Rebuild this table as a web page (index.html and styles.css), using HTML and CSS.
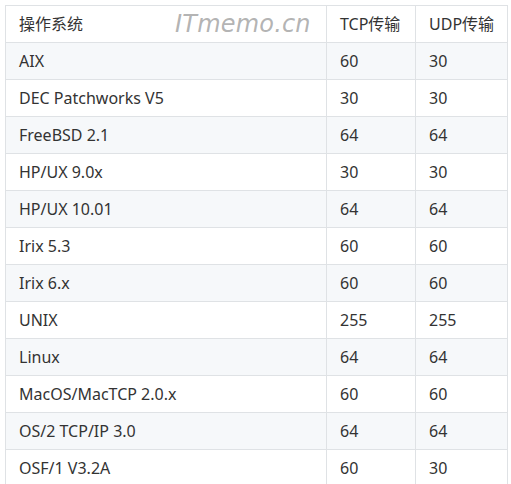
FILE: index.html
```html
<!DOCTYPE html>
<html lang="zh">
<head>
<meta charset="utf-8">
<link rel="stylesheet" href="styles.css">
</head>
<body>
<div class="wrap">
  <table class="tbl">
    <colgroup><col class="c1"><col class="c2"><col class="c3"></colgroup>
    <thead>
      <tr><th>操作系统</th><th>TCP传输</th><th>UDP传输</th></tr>
    </thead>
    <tbody>
      <tr><td>AIX</td><td>60</td><td>30</td></tr>
      <tr><td>DEC Patchworks V5</td><td>30</td><td>30</td></tr>
      <tr><td>FreeBSD 2.1</td><td>64</td><td>64</td></tr>
      <tr><td>HP/UX 9.0x</td><td>30</td><td>30</td></tr>
      <tr><td>HP/UX 10.01</td><td>64</td><td>64</td></tr>
      <tr><td>Irix 5.3</td><td>60</td><td>60</td></tr>
      <tr><td>Irix 6.x</td><td>60</td><td>60</td></tr>
      <tr><td>UNIX</td><td>255</td><td>255</td></tr>
      <tr><td>Linux</td><td>64</td><td>64</td></tr>
      <tr><td>MacOS/MacTCP 2.0.x</td><td>60</td><td>60</td></tr>
      <tr><td>OS/2 TCP/IP 3.0</td><td>64</td><td>64</td></tr>
      <tr><td>OSF/1 V3.2A</td><td>60</td><td>30</td></tr>
    </tbody>
  </table>
  <div class="watermark">ITmemo.cn</div>
</div>
</body>
</html>
```
FILE: styles.css
```css
html, body {
  margin: 0;
  padding: 0;
  background: #fff;
}
.wrap {
  position: relative;
  padding: 5px;
  font-family: "Noto Sans", "Noto Sans CJK SC", sans-serif;
  font-size: 16px;
  color: #333;
}
.tbl {
  border-collapse: collapse;
  width: 502px;
  table-layout: fixed;
}
.c1 { width: 321px; }
.c2 { width: 89px; }
.c3 { width: 92px; }
.tbl th, .tbl td {
  border: 1px solid #dfe2e5;
  height: 37px;
  padding: 0 0 0 13px;
  text-align: left;
  font-weight: normal;
  line-height: 20px;
  box-sizing: border-box;
}
.tbl tbody tr:nth-child(odd) {
  background: #f6f8fa;
}
.watermark {
  position: absolute;
  left: 175px;
  top: 6px;
  font-family: "DejaVu Sans", sans-serif;
  font-style: italic;
  font-size: 24px;
  letter-spacing: 0.2px;
  color: rgba(160, 160, 160, 0.8);
  line-height: 37px;
}
```
